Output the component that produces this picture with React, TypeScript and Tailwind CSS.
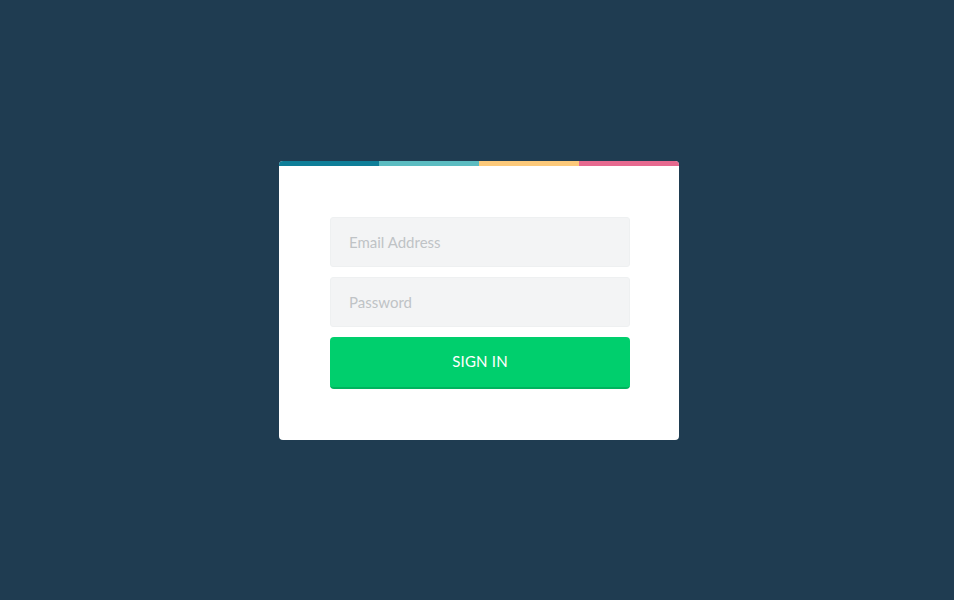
import React from "react";

const stripes = ["bg-[#0e7e98]", "bg-[#5bbcc1]", "bg-[#fcc97a]", "bg-[#e6698f]"];

const App: React.FC = () => {
  return (
    <div className="min-h-screen w-full bg-[#1f3c51] flex items-center justify-center font-['Lato',sans-serif]">
      <div className="w-[400px] ml-[4px] bg-white rounded-[4px] overflow-hidden">
        {/* colour stripe */}
        <div className="flex h-[5px]">
          {stripes.map((c) => (
            <div key={c} className={`flex-1 ${c}`} />
          ))}
        </div>

        <form
          className="flex flex-col gap-[10px] pl-[51px] pr-[49px] pt-[51px] pb-[51px]"
          onSubmit={(e) => e.preventDefault()}
        >
          <input
            type="email"
            placeholder="Email Address"
            className="h-[50px] w-full rounded-[3px] bg-[#f3f4f5] border border-[#eef0f1] px-[18px] text-[15px] text-[#555] placeholder:text-[#bfc3c6] outline-none"
          />
          <input
            type="password"
            placeholder="Password"
            className="h-[50px] w-full rounded-[3px] bg-[#f3f4f5] border border-[#eef0f1] px-[18px] text-[15px] text-[#555] placeholder:text-[#bfc3c6] outline-none"
          />
          <button
            type="submit"
            className="h-[52px] w-full rounded-[4px] bg-[#00cf6d] border-b-2 border-[#00b35e] text-white text-[15px] tracking-[0.2px]"
          >
            SIGN IN
          </button>
        </form>
      </div>
    </div>
  );
};

export default App;
